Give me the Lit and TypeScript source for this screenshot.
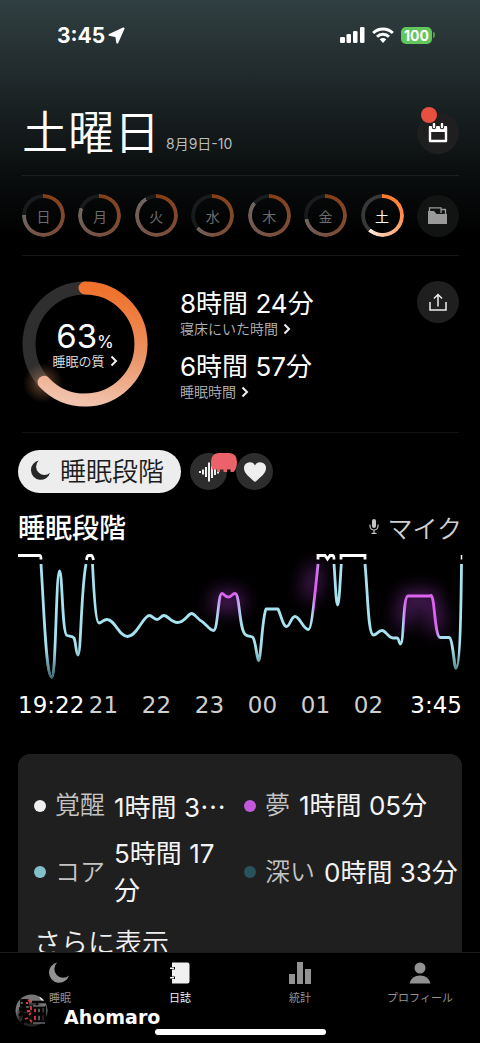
import { LitElement, html, svg, css } from "lit";
import { customElement, property } from "lit/decorators.js";

const chevron = html`<svg class="chev" viewBox="0 0 8 12" aria-hidden="true"><path d="M1.500 1.500 6 6l-4.500 4.500" fill="none" stroke="#f2f2f2" stroke-width="2"/></svg>`;

const moonPath = "M8.2.6A10.2 10.2 0 1 0 20 13.4 8.6 8.6 0 0 1 8.2.6Z";

@customElement("day-ring")
class DayRing extends LitElement {
  @property() label = "";
  @property({ type: Number }) score = 0;
  @property({ type: Boolean, reflect: true }) selected = false;

  static styles = css`
    :host { display: block; }
    .day {
      position: relative; display: grid; place-items: center;
      width: 43px; height: 43px; padding: 0; border: 0; background: none;
      color: #6c6c6c; font: 14px Inter, "Noto Sans CJK JP", sans-serif;
    }
    .ring {
      position: absolute; inset: 0; border-radius: 50%; opacity: 0.5;
      background: conic-gradient(#ff7420, #ff8c50 25%, #efa183 50%, #d9c4bc var(--score), #2c3030 var(--score));
      -webkit-mask: radial-gradient(circle, transparent 17px, #000 18px);
      mask: radial-gradient(circle, transparent 17px, #000 18px);
    }
    :host([selected]) .ring {
      opacity: 1;
      background: conic-gradient(#ff7a2c, #ff8c4e 25%, #ffc9a8 50%, #ffe9dd var(--score), #383838 var(--score));
    }
    :host([selected]) .day { color: #fff; }
  `;

  render() {
    return html`<button class="day" aria-pressed=${this.selected}>
      <span class="ring" style="--score:${this.score}%"></span>${this.label}
    </button>`;
  }
}

@customElement("sleep-chart")
class SleepChart extends LitElement {
  static styles = css`
    :host { display: block; }
    .plot { display: block; width: 100%; overflow: visible; }
    .axis {
      display: grid; grid-template-columns: 59px repeat(6, 1fr) 67px;
      margin-top: 8px; font: 23px/28px "DejaVu Sans", sans-serif; color: #cfcfcf;
      text-align: center; white-space: nowrap;
    }
    .edge { color: #fff; text-align: left; }
    .edge:last-child { text-align: right; }
  `;

  render() {
    const line =
      "M41 564C44 610 46 677 51.800 677C56 677 56 571 59.500 571C62.500 571 62 634 67 635.500C70 636.500 72 636 74 638C76 642 76 655 78 655C81 655 81 590 86 564" +
      "M92.500 564C94 595 96 623 99 623C102 623 103 619.500 107 619.500C115 619.500 119 636.500 127.500 636.500C137 636.500 143 615.500 149.500 615.500C152 615.500 154 619.500 157 619.500C160 619.500 161 615.500 164 615.500C168 615.500 171 622.500 177.500 622.500C185 622.500 188 613.500 191.500 613.500C195 613.500 197 619 202 621.500C206 624 210 630.500 213.500 630.500C218 630.500 218 593.500 222 593.500C224 593.500 225 597 228.500 597C232 597 232 593.500 235 593.500C240 593.500 239 632 246 635C249 637 251 636 253 637.500C256 642 257 660.500 258.500 660.500C261 660.500 262 618 266 609H278C281 615 283 626.500 286.500 626.500C290 626.500 291 616.500 295 616.500C300 616.500 303 629.500 308.500 629.500C312 629.500 315 592 318 564" +
      "M334 564C335.500 584 336 605 337.700 605C339 605 340 584 341.300 564" +
      "M365 564C368 596 368 635 373.500 635C377 635 378 630.500 382 630.500C386 630.500 388 638 393 638H397C399 638 399 644 400.500 644C404 644 403 596 408 596H430C435 590 434 636 440 637.500H449C453 638 454 668 456 668C460 668 461 610 461.500 564";
    return html`
      <svg class="plot" viewBox="18 551 444 132" role="img" aria-label="睡眠段階">
        <defs>
          <linearGradient id="stage" gradientUnits="userSpaceOnUse" x1="18" y1="0" x2="462" y2="0">
            ${[
              [0, "#a6e2ef"], [0.448, "#a6e2ef"], [0.458, "#dc63f0"], [0.49, "#dc63f0"], [0.502, "#a6e2ef"],
              [0.662, "#a6e2ef"], [0.668, "#dc63f0"], [0.674, "#dc63f0"], [0.68, "#a6e2ef"],
              [0.866, "#a6e2ef"], [0.872, "#dc63f0"], [0.942, "#dc63f0"], [0.952, "#a6e2ef"], [1, "#a6e2ef"],
            ].map(([o, c]) => svg`<stop offset=${o} stop-color=${c}></stop>`)}
          </linearGradient>
          <linearGradient id="deep" gradientUnits="userSpaceOnUse" x1="0" y1="648" x2="0" y2="678">
            <stop offset="0" stop-color="#3b6973" stop-opacity="0"></stop>
            <stop offset="1" stop-color="#3b6973"></stop>
          </linearGradient>
          <filter id="glow" x="-200%" y="-200%" width="500%" height="500%"><feGaussianBlur stdDeviation="9"/></filter>
        </defs>
        <g fill="none" stroke="#8d35a8" stroke-width="15" opacity="0.550" filter="url(#glow)">
          <path d="M217 612 221 598H235L238 612M309 598 316 566M403 626 408 598H431L437 632"/>
        </g>
        <path d=${line} fill="none" stroke="url(#stage)" stroke-width="2.800" stroke-linejoin="round"/>
        <path d=${line} fill="none" stroke="url(#deep)" stroke-width="3"/>
        <path d="M18 555.500H39.500Q41 555.500 41 559.500M86.500 560Q87 555.500 88.500 555.500H91.500Q92.500 555.500 93.500 560M318 559.500V555.500H325L327.500 559 330 555.500H333Q334 556 334 559.500M341 559.500V555.500H365V559.500" fill="none" stroke="#fff" stroke-width="2.800"/>
        <path d="M461.500 555V559.500" stroke="#fff" stroke-width="1.500"/>
      </svg>
      <div class="axis">
        <span class="edge">19:22</span>
        ${["21", "22", "23", "00", "01", "02"].map((h) => html`<span>${h}</span>`)}
        <span class="edge">3:45</span>
      </div>`;
  }
}

@customElement("app-root")
class AppRoot extends LitElement {
  static styles = css`
    :host {
      display: flex; flex-direction: column; height: 100vh; overflow: hidden;
      background: linear-gradient(#303f41 0, #242e30 60px, #161d1e 120px, #0b0e0f 172px, #000 236px) #000;
      color: #fff; font-family: Inter, "Noto Sans CJK JP", sans-serif;
      --kana: "Noto Sans CJK JP", sans-serif;
    }
    * { box-sizing: border-box; }
    button { padding: 0; border: 0; color: inherit; font: inherit; }
    svg { display: block; }
    .status {
      display: flex; align-items: center; justify-content: space-between;
      height: 70px; padding: 0 45px 0 57px; flex: none;
    }
    .clock { display: flex; align-items: center; gap: 3px; font-size: 21px; font-weight: 700; }
    .signals { display: flex; align-items: center; gap: 7px; }
    .battery { display: flex; align-items: center; gap: 1px; }
    .level {
      width: 31px; height: 17px; border-radius: 5px; background: #62c65c;
      font-size: 14px; line-height: 17px; font-weight: 700; text-align: center;
    }
    .tip { width: 2px; height: 6px; border-radius: 0 2px 2px 0; background: #4b9a48; }
    .content { flex: 1; min-height: 0; overflow: hidden; }
    .top { padding: 0 21px 0 22px; }
    .title { display: flex; align-items: center; justify-content: space-between; height: 106px; padding-top: 20px; border-bottom: 1px solid #1b2021; }
    .names { display: flex; align-items: baseline; gap: 6px; padding-bottom: 7px; }
    h1 { margin: 0; font: 350 46px/60px var(--kana); }
    .date { font-size: 14px; color: #b9bdbd; }
    .round {
      position: relative; display: grid; place-items: center; flex: none;
      width: 42px; height: 42px; border-radius: 50%; background: #1f1f1f;
    }
    .alert { position: absolute; left: 4px; top: -5px; width: 16px; height: 16px; border-radius: 50%; background: #e5503f; }
    .week { display: flex; align-items: center; justify-content: space-between; height: 80px; border-bottom: 1px solid #151515; }
    .dim { background: #121313; }
    .summary { display: flex; align-items: flex-start; height: 177px; padding-top: 25px; border-bottom: 1px solid #111; }
    .quality { position: relative; width: 126px; height: 126px; background: none; flex: none; }
    .dial { width: 126px; height: 126px; overflow: visible; }
    .score { position: absolute; inset: 37px 0 0 0; display: flex; flex-direction: column; align-items: center; }
    .num { font-size: 33px; line-height: 36px; }
    .pct { font-size: 17px; line-height: 17px; }
    .cap { display: flex; align-items: center; gap: 5px; font-size: 13px; line-height: 14px; color: #e4e4e4; font-weight: 350; }
    .chev { width: 8px; height: 12px; }
    .stats { display: flex; flex-direction: column; gap: 14px; flex: 1; padding: 5px 0 0 32px; align-items: flex-start; }
    .stat { display: flex; flex-direction: column; align-items: flex-start; background: none; }
    .big { font-size: 26px; line-height: 36px; font-weight: 400; }
    .sub { display: flex; align-items: center; gap: 5px; font-size: 14px; line-height: 13px; height: 13px; color: #b5b5b5; font-weight: 350; }
    .sleep { padding: 17px 18px 0; }
    .tabs { display: flex; align-items: center; gap: 9px; }
    .pill {
      display: flex; align-items: center; gap: 9px; height: 43px; padding: 0 17px 3px 13px;
      border-radius: 22px; background: #ededed; color: #1c1c1c; font: 350 26px/40px var(--kana);
    }
    .tab { position: relative; display: grid; place-items: center; width: 37px; height: 37px; border-radius: 50%; background: #2d2d2d; }
    .bubble { position: absolute; left: 20px; top: 0; z-index: 1; }
    .head { display: flex; align-items: center; justify-content: space-between; height: 58px; padding-top: 9px; }
    h2 { margin: 0; font: 500 27px/40px var(--kana); }
    .mic { display: flex; align-items: center; gap: 8px; background: none; font: 350 25px/40px var(--kana); color: #d0d0d0; }
    .card { margin-top: 35px; padding: 33px 0 33px 16px; border-radius: 12px; background: #1f1f1f; }
    .legend { display: grid; grid-template-columns: 198px minmax(0, 1fr); column-gap: 12px; row-gap: 11px; margin: 0; font-size: 26px; line-height: 37px; }
    .item { display: flex; align-items: center; }
    .dot { width: 12px; height: 12px; margin-right: 9px; border-radius: 50%; flex: none; }
    .awake { background: #efefef; } .dream { background: #c458dc; } .core { background: #84c0cc; } .deeps { background: #28535d; }
    dt { flex: none; margin-right: 9px; font-size: 25px; font-weight: 350; color: #c4c4c4; }
    dd { margin: 0; color: #f4f4f4; }
    .one { height: 37px; white-space: nowrap; }
    .jp { font-family: var(--kana); }
    .more { margin-top: 13px; background: none; font: 350 27px/40px var(--kana); color: #f0f0f0; }
    .nav {
      position: relative; display: grid; grid-template-columns: repeat(4, 1fr); align-items: start;
      flex: none; height: 91px; padding-top: 9px; border-top: 1px solid #1c1c1c; background: #000;
    }
    .link { display: flex; flex-direction: column; align-items: center; gap: 6px; color: #929292; font-size: 11px; line-height: 16px; text-decoration: none; }
    .link svg { width: 22px; height: 22px; fill: currentColor; }
    .on { color: #f0f0f0; }
    .home { position: absolute; left: 50%; bottom: 8px; width: 171px; height: 6px; margin-left: -85px; border-radius: 3px; background: #fff; }
    .mark { position: absolute; left: 15px; bottom: 13px; display: flex; align-items: center; gap: 16px; font: 700 19px/26px "DejaVu Sans", sans-serif; }
    .who { padding-top: 14px; }
  `;

  private value(text: string) {
    return html`<span class="big">${text}</span>`;
  }

  render() {
    const days: [string, number][] = [["日", 75.5], ["月", 81], ["火", 91], ["水", 64], ["木", 86], ["金", 72], ["土", 61.5]];
    return html`
      <div class="status">
        <div class="clock">3:45
          <svg width="17" height="17" viewBox="0 0 17 17"><path d="M15.500 1.500 1.500 7.800 8.300 9.300 9.300 15.500Z" fill="#fff" stroke="#fff" stroke-width="2" stroke-linejoin="round"/></svg>
        </div>
        <div class="signals">
          <svg width="25" height="16" viewBox="0 0 25 16" fill="#fff"><rect x="0" y="10" width="5" height="6" rx="1.300"/><rect x="6.500" y="7" width="4.500" height="9" rx="1.300"/><rect x="13" y="4" width="4.500" height="12" rx="1.300"/><rect x="20" y="0" width="4.500" height="16" rx="1.300"/></svg>
          <svg width="22" height="16" viewBox="0 0 22 16" fill="none" stroke="#fff" stroke-width="3"><path d="M1.200 6A14 14 0 0 1 20.800 6M5 9.800A8.600 8.600 0 0 1 17 9.800"/><path d="M7.700 12.300Q11 9.800 14.300 12.300L11 15.900Z" fill="#fff" stroke="none"/></svg>
          <div class="battery"><span class="level">100</span><span class="tip"></span></div>
        </div>
      </div>
      <main class="content">
        <section class="top">
          <div class="title">
            <div class="names"><h1>土曜日</h1><span class="date">8月9日-10</span></div>
            <button class="round" aria-label="カレンダー">
              <svg width="20" height="20" viewBox="0 0 20 20"><path d="M2 4.500H18V18H2Z" fill="none" stroke="#fff" stroke-width="2.400" stroke-linejoin="round"/><path d="M1 3H19V9H1Z" fill="#fff"/><path d="M6 0V4M14 0V4" stroke="#1f1f1f" stroke-width="4.400" stroke-linecap="round"/><path d="M6 1V4M14 1V4" stroke="#fff" stroke-width="2.400" stroke-linecap="round"/></svg>
              <span class="alert"></span>
            </button>
          </div>
          <div class="week">
            ${days.map(([d, s]) => html`<day-ring .label=${d} .score=${s} ?selected=${d === "土"}></day-ring>`)}
            <button class="round dim" aria-label="フォルダ">
              <svg width="19" height="17" viewBox="0 0 19 17"><path d="M1.500 6V.8H13V6M13 2.500H17.500V7" fill="none" stroke="#999" stroke-width="1.300"/><path d="M0 4H6L8.500 7H19V17H0Z" fill="#999"/></svg>
            </button>
          </div>
          <div class="summary">
            <button class="quality">
              <svg class="dial" viewBox="0 0 126 126">
                <defs>
                  <linearGradient id="arc" gradientUnits="userSpaceOnUse" x1="120" y1="70" x2="6" y2="50"><stop offset="0" stop-color="#f0722c"/><stop offset=".5" stop-color="#eb9263"/><stop offset="1" stop-color="#f1c3ad"/></linearGradient>
                  <radialGradient id="halo"><stop offset="0" stop-color="#f0b090" stop-opacity=".5"/><stop offset=".5" stop-color="#d08a60" stop-opacity=".25"/><stop offset="1" stop-color="#d08a60" stop-opacity="0"/></radialGradient>
                </defs>
                <circle cx="63" cy="63" r="56" fill="none" stroke="#2f2f2f" stroke-width="13"/>
                <circle cx="21" cy="102" r="20" fill="url(#halo)"/>
                <circle cx="63" cy="63" r="56" fill="none" stroke="url(#arc)" stroke-width="13" stroke-linecap="round" pathLength="100" stroke-dasharray="63 100" transform="rotate(-90 63 63)"/>
              </svg>
              <span class="score"><span class="num">63<span class="pct">%</span></span><span class="cap">睡眠の質${chevron}</span></span>
            </button>
            <div class="stats">
              <button class="stat">${this.value("8時間 24分")}<span class="sub">寝床にいた時間${chevron}</span></button>
              <button class="stat">${this.value("6時間 57分")}<span class="sub">睡眠時間${chevron}</span></button>
            </div>
            <button class="round" aria-label="共有">
              <svg width="18" height="18" viewBox="0 0 18 18" fill="none" stroke="#eee" stroke-width="1.500"><path d="M1 9V17H17V9M9 13.500V1.500M5 5.500 9 1.500 13 5.500"/></svg>
            </button>
          </div>
        </section>
        <section class="sleep">
          <div class="tabs">
            <button class="pill"><svg width="20" height="21" viewBox="0 0 21 22"><path d=${moonPath} fill="#262626"/></svg>睡眠段階</button>
            <button class="tab" aria-label="音">
              <svg width="24" height="20" viewBox="0 0 24 20" stroke="#eee" stroke-width="2"><path d="M3 9V11M6 7.500V12.500M9 5V15M12 .5V19.500M15 4V16M18 7V13M21 8.500V11.500"/></svg>
              <svg class="bubble" width="28" height="20" viewBox="0 0 28 20"><path d="M8 0H20Q27 1 27 9 27 16 23.500 19H20.500V16.500H17V19H13.500V16.500H10V19H7V16.500H2Q1 13 1 9 1 1 8 0Z" fill="#ec626b"/></svg>
            </button>
            <button class="tab" aria-label="心拍">
              <svg width="24" height="20" viewBox="0 0 24 20"><path d="M12 20C7 15.500 1 11.500 1 6.200A5.800 5.800 0 0 1 12 3.500 5.800 5.800 0 0 1 23 6.200C23 11.500 17 15.500 12 20Z" fill="#eee"/></svg>
            </button>
          </div>
          <div class="head">
            <h2>睡眠段階</h2>
            <button class="mic"><svg width="10" height="15" viewBox="0 0 10 15" fill="none" stroke="#c4c4c4" stroke-width="1.200"><rect x="3" y="0" width="4" height="9" rx="2" fill="#c4c4c4" stroke="none"/><path d="M1 5.500V7A4 4 0 0 0 9 7V5.500M5 11V14M2.500 14.300H7.500"/></svg>マイク</button>
          </div>
          <sleep-chart></sleep-chart>
          <div class="card">
            <dl class="legend">
              <div class="item"><i class="dot awake"></i><dt>覚醒</dt><dd class="one">1時間 3<span class="jp">…</span></dd></div>
              <div class="item"><i class="dot dream"></i><dt>夢</dt><dd class="one">1時間 05分</dd></div>
              <div class="item"><i class="dot core"></i><dt>コア</dt><dd>5時間 17分</dd></div>
              <div class="item"><i class="dot deeps"></i><dt>深い</dt><dd class="one">0時間 33分</dd></div>
            </dl>
            <button class="more">さらに表示</button>
          </div>
        </section>
      </main>
      <nav class="nav">
        <a class="link" href="#sleep"><svg viewBox="0 0 22 22"><path d=${moonPath}/></svg>睡眠</a>
        <a class="link on" href="#journal"><svg viewBox="0 0 22 22"><path d="M3 .5H18.500Q20.500 .5 20.500 2.500V19.500Q20.500 21.500 18.500 21.500H3V17H6V14.500H3V7.500H6V5H3Z"/><path d="M1 5.500H5V7H1ZM1 15H5V16.500H1Z"/></svg>日誌</a>
        <a class="link" href="#stats"><svg viewBox="0 0 22 22"><path d="M0 12H6V22H0ZM8 0H14V22H8ZM16 7H22V22H16Z"/></svg>統計</a>
        <a class="link" href="#profile"><svg viewBox="0 0 22 22"><circle cx="11" cy="6" r="5.500"/><path d="M.5 21.500Q2.500 13.500 11 13.500T21.500 21.500Z"/></svg>プロフィール</a>
        <div class="mark">
          <svg width="33" height="35" viewBox="0 0 33 35">
            <defs><radialGradient id="orb" cx=".5" cy=".7"><stop offset="0" stop-color="#111"/><stop offset=".75" stop-color="#2a2a2a"/><stop offset="1" stop-color="#777"/></radialGradient></defs>
            <circle cx="16.500" cy="17.500" r="16" fill="url(#orb)"/>
            <path d="M24 3.500Q28 5 29.500 9Q26 8 24 3.500Z" fill="#eee"/>
            <path d="M5 8H14M9.500 6V19M5 12H14M4 16H15M7 19 5 23M8 22H14L7 30M8 24 15 30" fill="none" stroke="#000" stroke-width="3.500"/>
            <path d="M17 9H31M18 14H30V29H18ZM22 9V28M26 14V28M18 21H30" fill="none" stroke="#050505" stroke-width="2.500"/>
            <path d="M18 13H30M18 30H30M24 16V19M24 23V27M6 10H8M11 14H14" fill="none" stroke="#999" stroke-width="1"/>
            <path d="M13 7 16 9M11 10H13M12 18H15M14 22 16 20M10 26 13 25M16 13V17M20 16V19M20 23V27M15 27 17 29" fill="none" stroke="#d83a3a" stroke-width="1.800"/>
          </svg>
          <span class="who">Ahomaro</span>
        </div>
        <div class="home"></div>
      </nav>`;
  }
}
